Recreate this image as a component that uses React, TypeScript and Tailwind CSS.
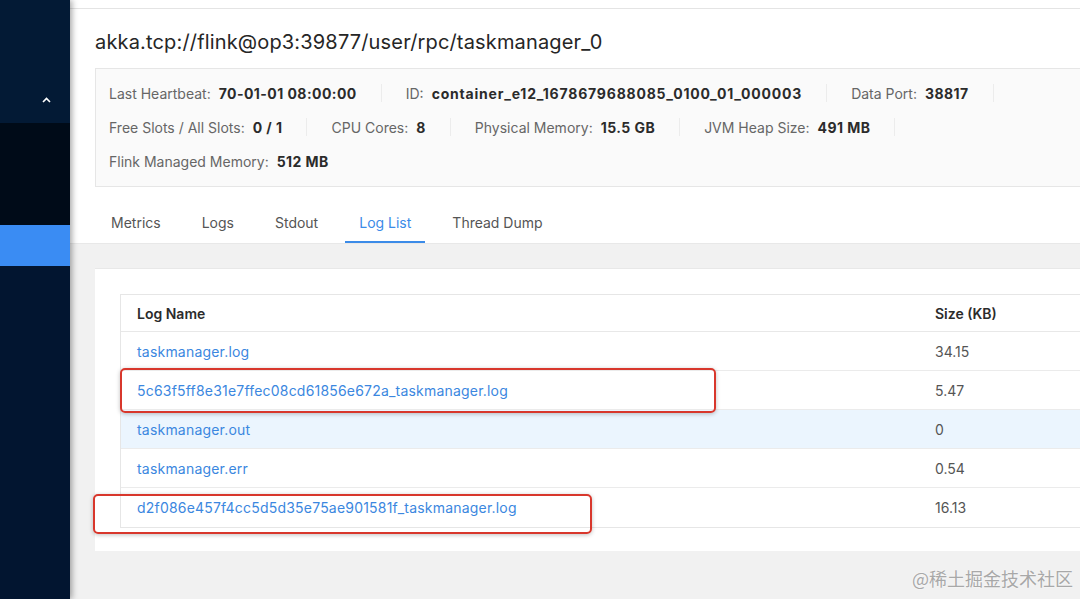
const items1 = [
  { label: "Last Heartbeat:", value: "70-01-01 08:00:00" },
  { label: "ID:", value: "container_e12_1678679688085_0100_01_000003", wide: true },
  { label: "Data Port:", value: "38817" },
]
const items2 = [
  { label: "Free Slots / All Slots:", value: "0 / 1" },
  { label: "CPU Cores:", value: "8" },
  { label: "Physical Memory:", value: "15.5 GB" },
  { label: "JVM Heap Size:", value: "491 MB" },
]
const items3 = [{ label: "Flink Managed Memory:", value: "512 MB" }]

const tabs = ["Metrics", "Logs", "Stdout", "Log List", "Thread Dump"]

const logs = [
  { name: "taskmanager.log", size: "34.15" },
  { name: "5c63f5ff8e31e7ffec08cd61856e672a_taskmanager.log", size: "5.47" },
  { name: "taskmanager.out", size: "0", hover: true },
  { name: "taskmanager.err", size: "0.54" },
  { name: "d2f086e457f4cc5d5d35e75ae901581f_taskmanager.log", size: "16.13" },
]

type Item = { label: string; value: string; wide?: boolean }

function DescRow({ items, last }: { items: Item[]; last?: boolean }) {
  return (
    <div className="flex items-center h-[34px]">
      {items.map((it, i) => (
        <div key={i} className="flex items-center">
          <div className="flex items-center px-[13px] whitespace-nowrap">
            <span className="text-[#666]">{it.label}</span>
            <span
              className={
                "ml-2 font-bold text-[#2b2b2b] " + (it.wide ? "tracking-[0.8px]" : "tracking-[0.45px]")
              }
            >
              {it.value}
            </span>
          </div>
          {!last && <div className="w-px h-[18px] bg-[#ececec] mx-[11px]" />}
        </div>
      ))}
    </div>
  )
}

export default function App() {
  return (
    <div className="relative w-[1080px] h-[599px] overflow-hidden flex font-['Inter','Liberation_Sans',sans-serif] text-[14px]">
      {/* sidebar */}
      <div className="w-[70px] shrink-0 flex flex-col bg-[#021530] z-10 shadow-[2px_0_6px_rgba(0,0,0,0.35)]">
        <div className="h-[123px] bg-[#031a35] flex items-end justify-end pr-[19px] pb-[20px]">
          <svg width="9" height="6" viewBox="0 0 9 6" fill="none">
            <path d="M1 5L4.5 1.5L8 5" stroke="#fff" strokeWidth="1.6" />
          </svg>
        </div>
        <div className="h-[102px] bg-[#000b18]" />
        <div className="h-[41px] bg-[#3a8cf3]" />
        <div className="flex-1" />
      </div>

      {/* main */}
      <div className="flex-1 min-w-0 flex flex-col bg-[#f1f1f1]">
        <div className="h-[9px] bg-white border-b border-[#e4e4e4] shadow-[0_1px_3px_rgba(0,0,0,0.06)]" />
        <div className="bg-white pl-[25px] border-b border-[#e8e8e8]">
          <div className="pt-[19px] text-[20px] leading-[28px] tracking-[0.16px] text-[#262626] whitespace-nowrap">
            akka.tcp://flink@op3:39877/user/rpc/taskmanager_0
          </div>
          <div className="mt-[12px] w-[1050px] bg-[#fafafa] border border-[#e6e6e6] pt-[7px] pb-[8px] text-[14px]">
            <DescRow items={items1} />
            <DescRow items={items2} />
            <DescRow items={items3} last />
          </div>
          <div className="mt-[14px] flex ml-[2px] gap-[13px] h-[42px]">
            {tabs.map((t) => (
              <div
                key={t}
                className={
                  t === "Log List"
                    ? "px-[14px] flex items-center text-[#3b8be8] border-b-2 border-[#3b8be8] pt-[2px]"
                    : "px-[14px] flex items-center text-[#555] pt-[2px] border-b-2 border-transparent"
                }
              >
                {t}
              </div>
            ))}
          </div>
        </div>

        {/* body */}
        <div className="pl-[25px] pt-[24px]">
          <div className="w-[1050px] bg-white border-t border-[#e8e8e8] pl-[25px] pt-[25px] pb-[23px]">
            <div className="border border-[#e6e6e6] text-[14px]">
              <div className="flex h-[37px] items-center border-b border-[#e8e8e8] font-semibold text-[#2b2b2b]">
                <div className="w-[798px] pl-[16px]">Log Name</div>
                <div className="pl-[16px]">Size (KB)</div>
              </div>
              {logs.map((l) => (
                <div
                  key={l.name}
                  className={
                    "flex h-[39px] items-center border-b border-[#ebebeb] last:border-b-0 " +
                    (l.hover ? "bg-[#ebf5fe]" : "bg-white")
                  }
                >
                  <div className="w-[798px] pl-[16px] text-[#3b87e0] tracking-[0.2px] whitespace-nowrap">{l.name}</div>
                  <div className="pl-[16px] text-[#555]">{l.size}</div>
                </div>
              ))}
            </div>
          </div>
        </div>
      </div>

      {/* annotation boxes */}
      <div className="absolute left-[120px] top-[368px] w-[596px] h-[45px] border-2 border-[#d8372c] rounded-[5px] shadow-[0_1px_4px_rgba(0,0,0,0.25)] pointer-events-none" />
      <div className="absolute left-[93px] top-[494px] w-[499px] h-[40px] border-2 border-[#d8372c] rounded-[5px] shadow-[0_1px_4px_rgba(0,0,0,0.25)] pointer-events-none" />

      {/* watermark */}
      <div className="absolute right-[7px] bottom-[7px] text-[18px] text-[#a8a8a8] font-['Noto_Sans_CJK_SC',sans-serif] [text-shadow:0_0_2px_#fff]">
        @稀土掘金技术社区
      </div>
    </div>
  )
}
